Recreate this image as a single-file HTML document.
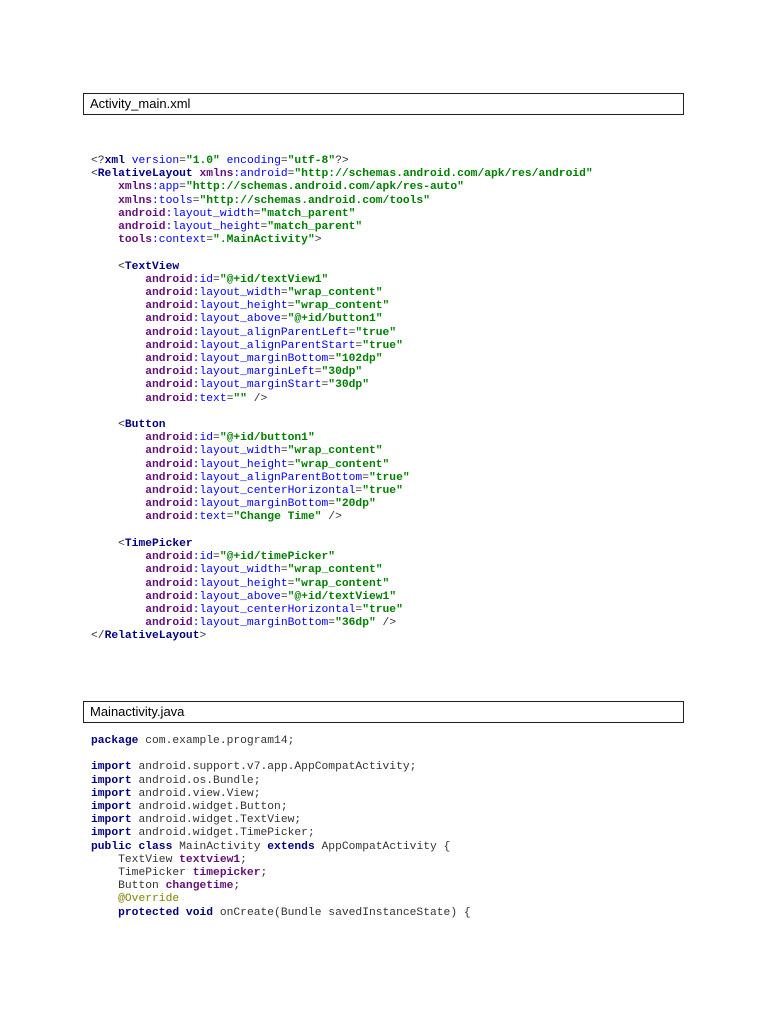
<!DOCTYPE html>
<html><head><style>
body{margin:0;background:#fff;width:768px;height:1024px;position:relative;overflow:hidden}
.box{position:absolute;left:83px;width:593px;height:20px;border:1px solid #222;font-family:"Liberation Sans",sans-serif;font-size:13px;line-height:20px;padding-left:6px;box-sizing:content-box;color:#000}
pre{position:absolute;left:91px;margin:0;font-family:"Liberation Mono",monospace;font-size:11.3px;line-height:13.2px;color:#333}
.t{color:#000080;font-weight:bold}.n{color:#660e7a;font-weight:bold}.a{color:#0000ff}.v{color:#008000;font-weight:bold}
.k{color:#000080;font-weight:bold}.f{color:#660e7a;font-weight:bold}.o{color:#808000}
</style></head><body>
<div class="box" style="top:93px">Activity_main.xml</div>
<pre style="top:155px">&lt;?<span class="t">xml </span><span class="a">version</span>=<span class="v">"1.0" </span><span class="a">encoding</span>=<span class="v">"utf-8"</span>?&gt;
&lt;<span class="t">RelativeLayout </span><span class="n">xmlns</span><span class="a">:android</span>=<span class="v">"http://schemas.android.com/apk/res/android"</span>
    <span class="n">xmlns</span><span class="a">:app</span>=<span class="v">"http://schemas.android.com/apk/res-auto"</span>
    <span class="n">xmlns</span><span class="a">:tools</span>=<span class="v">"http://schemas.android.com/tools"</span>
    <span class="n">android</span><span class="a">:layout_width</span>=<span class="v">"match_parent"</span>
    <span class="n">android</span><span class="a">:layout_height</span>=<span class="v">"match_parent"</span>
    <span class="n">tools</span><span class="a">:context</span>=<span class="v">".MainActivity"</span>&gt;

    &lt;<span class="t">TextView</span>
        <span class="n">android</span><span class="a">:id</span>=<span class="v">"@+id/textView1"</span>
        <span class="n">android</span><span class="a">:layout_width</span>=<span class="v">"wrap_content"</span>
        <span class="n">android</span><span class="a">:layout_height</span>=<span class="v">"wrap_content"</span>
        <span class="n">android</span><span class="a">:layout_above</span>=<span class="v">"@+id/button1"</span>
        <span class="n">android</span><span class="a">:layout_alignParentLeft</span>=<span class="v">"true"</span>
        <span class="n">android</span><span class="a">:layout_alignParentStart</span>=<span class="v">"true"</span>
        <span class="n">android</span><span class="a">:layout_marginBottom</span>=<span class="v">"102dp"</span>
        <span class="n">android</span><span class="a">:layout_marginLeft</span>=<span class="v">"30dp"</span>
        <span class="n">android</span><span class="a">:layout_marginStart</span>=<span class="v">"30dp"</span>
        <span class="n">android</span><span class="a">:text</span>=<span class="v">""</span> /&gt;

    &lt;<span class="t">Button</span>
        <span class="n">android</span><span class="a">:id</span>=<span class="v">"@+id/button1"</span>
        <span class="n">android</span><span class="a">:layout_width</span>=<span class="v">"wrap_content"</span>
        <span class="n">android</span><span class="a">:layout_height</span>=<span class="v">"wrap_content"</span>
        <span class="n">android</span><span class="a">:layout_alignParentBottom</span>=<span class="v">"true"</span>
        <span class="n">android</span><span class="a">:layout_centerHorizontal</span>=<span class="v">"true"</span>
        <span class="n">android</span><span class="a">:layout_marginBottom</span>=<span class="v">"20dp"</span>
        <span class="n">android</span><span class="a">:text</span>=<span class="v">"Change Time"</span> /&gt;

    &lt;<span class="t">TimePicker</span>
        <span class="n">android</span><span class="a">:id</span>=<span class="v">"@+id/timePicker"</span>
        <span class="n">android</span><span class="a">:layout_width</span>=<span class="v">"wrap_content"</span>
        <span class="n">android</span><span class="a">:layout_height</span>=<span class="v">"wrap_content"</span>
        <span class="n">android</span><span class="a">:layout_above</span>=<span class="v">"@+id/textView1"</span>
        <span class="n">android</span><span class="a">:layout_centerHorizontal</span>=<span class="v">"true"</span>
        <span class="n">android</span><span class="a">:layout_marginBottom</span>=<span class="v">"36dp"</span> /&gt;
&lt;/<span class="t">RelativeLayout</span>&gt;</pre>
<div class="box" style="top:701px">Mainactivity.java</div>
<pre style="top:735px"><span class="k">package</span> com.example.program14;

<span class="k">import</span> android.support.v7.app.AppCompatActivity;
<span class="k">import</span> android.os.Bundle;
<span class="k">import</span> android.view.View;
<span class="k">import</span> android.widget.Button;
<span class="k">import</span> android.widget.TextView;
<span class="k">import</span> android.widget.TimePicker;
<span class="k">public class</span> MainActivity <span class="k">extends</span> AppCompatActivity {
    TextView <span class="f">textview1</span>;
    TimePicker <span class="f">timepicker</span>;
    Button <span class="f">changetime</span>;
    <span class="o">@Override</span>
    <span class="k">protected void</span> onCreate(Bundle savedInstanceState) {</pre>
</body></html>
